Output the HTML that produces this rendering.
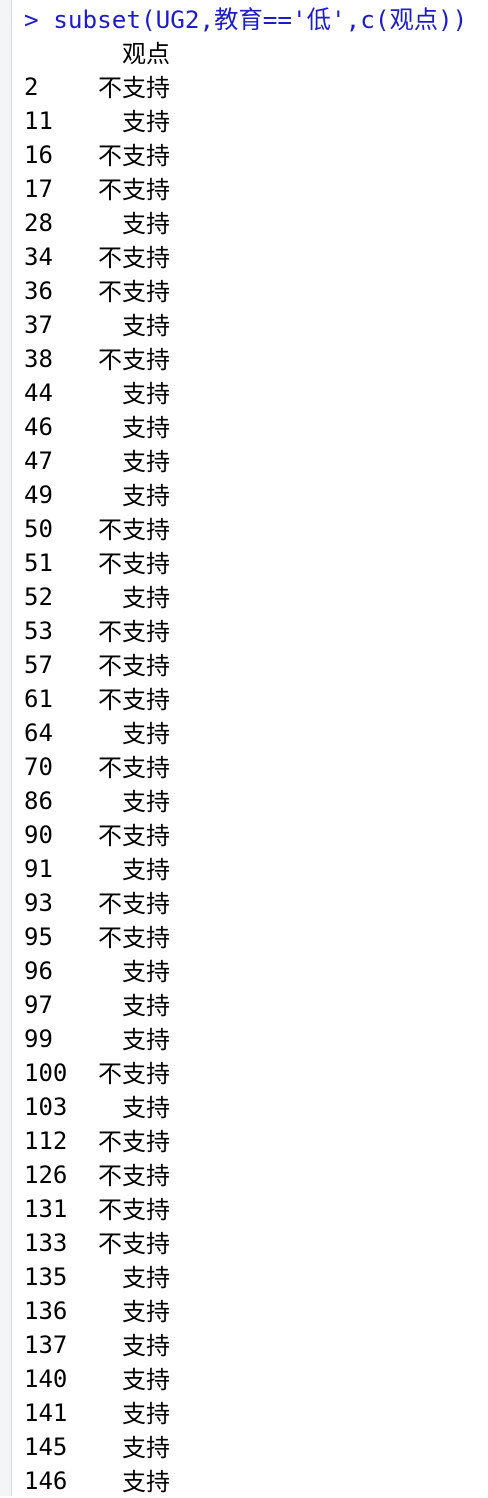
<!DOCTYPE html>
<html><head><meta charset="utf-8"><style>
html,body{margin:0;padding:0;width:488px;height:1496px;background:#fff;overflow:hidden}
.strip{position:absolute;left:0;top:0;width:11px;height:1496px;background:#f4f5f7;border-right:1px solid #d9d9d9}
.r{position:absolute;left:24px;height:34px;line-height:34px;font-family:"DejaVu Sans Mono","Noto Sans CJK SC",monospace;font-size:24px;color:#000;white-space:pre}
.n{position:relative;top:0px}
.v{position:absolute;left:0;top:-1px;width:146px;text-align:right;font-family:"Noto Sans CJK SC",sans-serif;font-size:24px;line-height:34px}
.cmd{color:#1c1cc8;font-size:24.3px}
</style></head><body>
<div class="strip"></div>
<div class="r cmd" style="top:3px">&gt; subset(UG2,教育=='低',c(观点))</div>
<div class="r" style="top:36px"><span class="v">观点</span></div>
<div class="r" style="top:70px"><span class="n">2</span><span class="v">不支持</span></div>
<div class="r" style="top:104px"><span class="n">11</span><span class="v">支持</span></div>
<div class="r" style="top:138px"><span class="n">16</span><span class="v">不支持</span></div>
<div class="r" style="top:172px"><span class="n">17</span><span class="v">不支持</span></div>
<div class="r" style="top:206px"><span class="n">28</span><span class="v">支持</span></div>
<div class="r" style="top:240px"><span class="n">34</span><span class="v">不支持</span></div>
<div class="r" style="top:274px"><span class="n">36</span><span class="v">不支持</span></div>
<div class="r" style="top:308px"><span class="n">37</span><span class="v">支持</span></div>
<div class="r" style="top:342px"><span class="n">38</span><span class="v">不支持</span></div>
<div class="r" style="top:376px"><span class="n">44</span><span class="v">支持</span></div>
<div class="r" style="top:410px"><span class="n">46</span><span class="v">支持</span></div>
<div class="r" style="top:444px"><span class="n">47</span><span class="v">支持</span></div>
<div class="r" style="top:478px"><span class="n">49</span><span class="v">支持</span></div>
<div class="r" style="top:512px"><span class="n">50</span><span class="v">不支持</span></div>
<div class="r" style="top:546px"><span class="n">51</span><span class="v">不支持</span></div>
<div class="r" style="top:580px"><span class="n">52</span><span class="v">支持</span></div>
<div class="r" style="top:614px"><span class="n">53</span><span class="v">不支持</span></div>
<div class="r" style="top:648px"><span class="n">57</span><span class="v">不支持</span></div>
<div class="r" style="top:682px"><span class="n">61</span><span class="v">不支持</span></div>
<div class="r" style="top:716px"><span class="n">64</span><span class="v">支持</span></div>
<div class="r" style="top:750px"><span class="n">70</span><span class="v">不支持</span></div>
<div class="r" style="top:784px"><span class="n">86</span><span class="v">支持</span></div>
<div class="r" style="top:818px"><span class="n">90</span><span class="v">不支持</span></div>
<div class="r" style="top:852px"><span class="n">91</span><span class="v">支持</span></div>
<div class="r" style="top:886px"><span class="n">93</span><span class="v">不支持</span></div>
<div class="r" style="top:920px"><span class="n">95</span><span class="v">不支持</span></div>
<div class="r" style="top:954px"><span class="n">96</span><span class="v">支持</span></div>
<div class="r" style="top:988px"><span class="n">97</span><span class="v">支持</span></div>
<div class="r" style="top:1022px"><span class="n">99</span><span class="v">支持</span></div>
<div class="r" style="top:1056px"><span class="n">100</span><span class="v">不支持</span></div>
<div class="r" style="top:1090px"><span class="n">103</span><span class="v">支持</span></div>
<div class="r" style="top:1124px"><span class="n">112</span><span class="v">不支持</span></div>
<div class="r" style="top:1158px"><span class="n">126</span><span class="v">不支持</span></div>
<div class="r" style="top:1192px"><span class="n">131</span><span class="v">不支持</span></div>
<div class="r" style="top:1226px"><span class="n">133</span><span class="v">不支持</span></div>
<div class="r" style="top:1260px"><span class="n">135</span><span class="v">支持</span></div>
<div class="r" style="top:1294px"><span class="n">136</span><span class="v">支持</span></div>
<div class="r" style="top:1328px"><span class="n">137</span><span class="v">支持</span></div>
<div class="r" style="top:1362px"><span class="n">140</span><span class="v">支持</span></div>
<div class="r" style="top:1396px"><span class="n">141</span><span class="v">支持</span></div>
<div class="r" style="top:1430px"><span class="n">145</span><span class="v">支持</span></div>
<div class="r" style="top:1464px"><span class="n">146</span><span class="v">支持</span></div>
</body></html>
